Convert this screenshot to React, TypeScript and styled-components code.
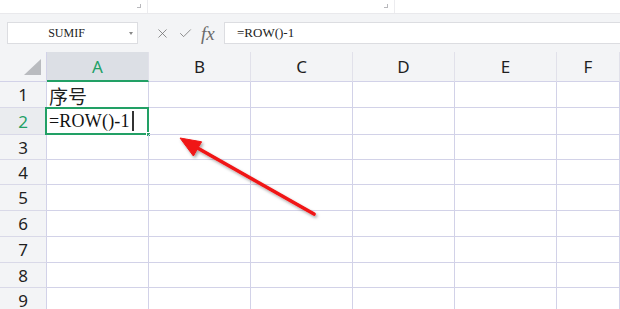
import styled, { createGlobalStyle } from "styled-components"
import { X, Check } from "lucide-react"

const GREEN = "#22a065"
const LINE = "#d2d2e8"

const columns = ["A", "B", "C", "D", "E", "F"]
const rowHeights = [26, 27, 25, 25, 26, 26, 26, 25, 26]

const Global = createGlobalStyle`
    html, body {
        margin: 0;
        padding: 0;
        background: #ffffff;
    }
    * {
        box-sizing: border-box;
    }
`

export default function App() {
    return (
        <Page>
            <Global />
            <TopStrip>
                <Segment $width={148}>
                    <CornerMark />
                </Segment>
                <Segment $width={247}>
                    <CornerMark />
                </Segment>
                <Segment />
            </TopStrip>

            <FormulaBar>
                <NameBox>
                    <span>SUMIF</span>
                    <DropArrow />
                </NameBox>
                <Tools>
                    <X size={15} strokeWidth={1.2} color="#6b6b6b" />
                    <Check size={15} strokeWidth={1.2} color="#6b6b6b" />
                    <Fx>fx</Fx>
                </Tools>
                <FormulaInput>=ROW()-1</FormulaInput>
            </FormulaBar>

            <Sheet $rows={rowHeights}>
                <Corner />
                {columns.map((c) => (
                    <ColHeader key={c} $active={c === "A"}>
                        {c}
                    </ColHeader>
                ))}
                {rowHeights.map((_, i) => {
                    const row = i + 1
                    return [
                        <RowHeader key={`h${row}`} $active={row === 2}>
                            {row}
                        </RowHeader>,
                        ...columns.map((c) => (
                            <Cell key={`${c}${row}`}>
                                {c === "A" && row === 1 && <CjkText>序号</CjkText>}
                                {c === "A" && row === 2 && (
                                    <>
                                        <FormulaText>=ROW()-1</FormulaText>
                                        <Caret />
                                        <Selection>
                                            <Handle />
                                        </Selection>
                                    </>
                                )}
                            </Cell>
                        )),
                    ]
                })}
            </Sheet>

            <Arrow viewBox="0 0 620 309" width={620} height={309}>
                <defs>
                    <filter id="shadow" x="-20%" y="-20%" width="140%" height="140%">
                        <feDropShadow dx="1.5" dy="2" stdDeviation="1.6" floodColor="#000" floodOpacity="0.35" />
                    </filter>
                </defs>
                <g filter="url(#shadow)" fill="#f01414" stroke="#f01414">
                    <line x1="314" y1="214" x2="194" y2="146" strokeWidth="3.6" strokeLinecap="round" />
                    <path d="M180 138 L193.4 156 L201.6 141.8 Z" strokeWidth="1" strokeLinejoin="round" />
                </g>
            </Arrow>
        </Page>
    )
}

const Page = styled.div`
    position: relative;
    width: 620px;
    height: 309px;
    overflow: hidden;
    background: #f3f4f6;
    font-family: "Noto Sans", "Noto Sans CJK SC", sans-serif;
`

const TopStrip = styled.div`
    display: flex;
    height: 14px;
    background: #ffffff;
    border-bottom: 1px solid #e9e9ec;
`

const Segment = styled.div<{ $width?: number }>`
    position: relative;
    flex: ${(p) => (p.$width ? `0 0 ${p.$width}px` : "1")};
    border-right: ${(p) => (p.$width ? "1px solid #ececef" : "none")};
`

const CornerMark = styled.div`
    position: absolute;
    right: 6px;
    top: 4px;
    width: 4px;
    height: 4px;
    border-right: 1px solid #b8b8bc;
    border-bottom: 1px solid #b8b8bc;
`

const FormulaBar = styled.div`
    display: flex;
    align-items: center;
    height: 38px;
    padding-left: 7px;
    background: #f3f4f6;
`

const NameBox = styled.div`
    position: relative;
    display: flex;
    align-items: center;
    justify-content: center;
    width: 131px;
    height: 22px;
    padding-right: 12px;
    background: #ffffff;
    border: 1px solid #dcdde1;
    font-family: "Liberation Serif", serif;
    font-size: 12px;
    color: #222;
`

const DropArrow = styled.div`
    position: absolute;
    right: 4px;
    top: 9px;
    width: 0;
    height: 0;
    border-left: 2.5px solid transparent;
    border-right: 2.5px solid transparent;
    border-top: 3px solid #888;
`

const Tools = styled.div`
    display: flex;
    align-items: center;
    gap: 8px;
    margin-left: 17px;
    width: 69px;
`

const Fx = styled.span`
    font-family: "Liberation Serif", serif;
    font-style: italic;
    font-size: 19px;
    color: #6b6b6b;
    line-height: 1;
`

const FormulaInput = styled.div`
    flex: 1;
    display: flex;
    align-items: center;
    height: 22px;
    padding-left: 12px;
    background: #ffffff;
    border: 1px solid #dcdde1;
    border-right: none;
    font-family: "Liberation Serif", serif;
    font-size: 13px;
    color: #222;
`

const Sheet = styled.div<{ $rows: number[] }>`
    display: grid;
    grid-template-columns: 47px repeat(5, 102px) 1fr;
    grid-template-rows: 30px ${(p) => p.$rows.map((h) => `${h}px`).join(" ")};
    background: #ffffff;
`

const HeaderBase = styled.div<{ $active?: boolean }>`
    display: flex;
    align-items: center;
    justify-content: center;
    font-family: "Noto Sans", sans-serif;
    font-size: 17px;
    color: ${(p) => (p.$active ? GREEN : "#1f1f1f")};
    border-right: 1px solid ${LINE};
    border-bottom: 1px solid ${LINE};
`

const Corner = styled.div`
    position: relative;
    background: #f3f4f6;
    border-right: 1px solid ${LINE};
    border-bottom: 1px solid ${LINE};

    &::after {
        content: "";
        position: absolute;
        right: 5px;
        bottom: 6px;
        width: 0;
        height: 0;
        border-left: 17px solid transparent;
        border-bottom: 16px solid #b9bbbf;
    }
`

const ColHeader = styled(HeaderBase)`
    background: ${(p) => (p.$active ? "#dcdfe5" : "#f3f4f6")};
    border-right-color: #e1e1ea;
    border-bottom: ${(p) => (p.$active ? `2px solid ${GREEN}` : `1px solid ${LINE}`)};
    padding-top: ${(p) => (p.$active ? "1px" : "0")};
`

const RowHeader = styled(HeaderBase)`
    background: ${(p) => (p.$active ? "#eaecef" : "#f3f4f6")};
    border-bottom-color: #d9d9e8;
`

const Cell = styled.div`
    position: relative;
    display: flex;
    align-items: center;
    padding-left: 2px;
    border-right: 1px solid ${LINE};
    border-bottom: 1px solid ${LINE};
    white-space: nowrap;
`

const CjkText = styled.span`
    font-family: "Noto Sans CJK SC", sans-serif;
    font-size: 19px;
    color: #1f1f1f;
    padding-top: 1px;
`

const FormulaText = styled.span`
    font-family: "Liberation Serif", serif;
    font-size: 18px;
    letter-spacing: 0.2px;
    color: #111;
`

const Caret = styled.span`
    display: inline-block;
    width: 2px;
    height: 20px;
    margin-left: 2px;
    background: #333;
`

const Selection = styled.div`
    position: absolute;
    left: -2px;
    top: -1px;
    right: -1px;
    bottom: -1px;
    border: 2px solid ${GREEN};
`

const Handle = styled.div`
    position: absolute;
    right: -4px;
    bottom: -4px;
    width: 5px;
    height: 5px;
    background: ${GREEN};
    border: 1px solid #ffffff;
`

const Arrow = styled.svg`
    position: absolute;
    left: 0;
    top: 0;
    pointer-events: none;
`
